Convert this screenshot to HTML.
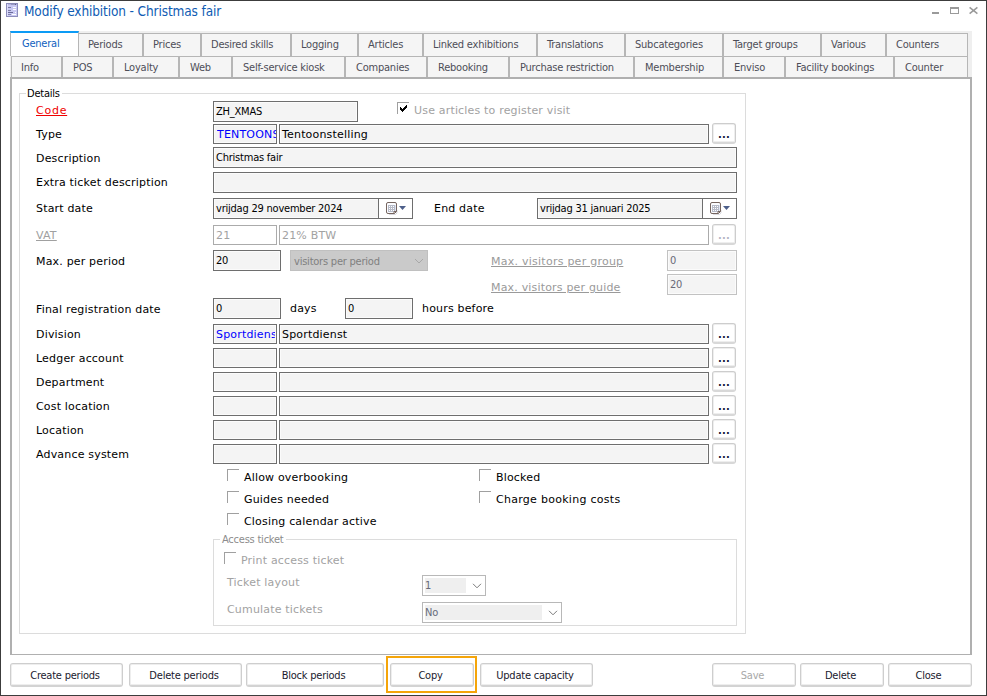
<!DOCTYPE html>
<html><head><meta charset="utf-8"><title>Modify exhibition - Christmas fair</title>
<style>
html,body{margin:0;padding:0;background:#fff;}
body{width:987px;height:696px;position:relative;overflow:hidden;font-family:"DejaVu Sans","Liberation Sans",sans-serif;font-size:11px;color:#000}
body>div,body>span,body>svg,.a{position:absolute}
.t{line-height:13px;height:13px;white-space:pre;font-size:11px}
.v{font-family:"DejaVu Sans","Liberation Sans",sans-serif;letter-spacing:0.18px}
.tt{font-family:"DejaVu Sans Condensed","Liberation Sans",sans-serif;letter-spacing:-0.22px}
.title{font-family:"DejaVu Sans Condensed","Liberation Sans",sans-serif;font-size:13.5px;letter-spacing:-0.12px;color:#0f5cb3;line-height:13px}
.tab{box-sizing:border-box;font-family:"DejaVu Sans Condensed","Liberation Sans",sans-serif;font-size:11px;letter-spacing:-0.22px;color:#4e4e58;text-align:left;padding-left:10px;background:#f5f5f5;border:1px solid #b6b6b6;border-bottom:0;white-space:nowrap}
.tab span{display:block;line-height:13px}
.tab.r1 span{margin-top:4px}
.tab.r2 span{margin-top:4px}
.tab.act{background:#fff;border-top:2px solid #0c9bf5;color:#0f5fc0;padding-left:11px}
.tab.r1{padding-left:9px}
.tab.act span{margin-top:4px}
.in{box-sizing:border-box;border:1px solid #6e6e6e;background:#f4f4f4;box-shadow:inset 0 0 0 1px #fbfbfb}
.cb{box-sizing:border-box;border-left:1px solid #a0a0a0;border-top:1px solid #a0a0a0;background:#fff}
.db{box-sizing:border-box;border:1px solid #cdcdcd;border-bottom:2px solid #d8d8d8;border-radius:3px;background:#fff;box-shadow:inset 0 0 0 1px #eeeeee}
.btn{box-sizing:border-box;border:1px solid #cecece;border-bottom:2px solid #d3d3d3;border-radius:3px;background:#fff;box-shadow:inset 0 0 0 1px #eeeeee;font-family:"DejaVu Sans Condensed","Liberation Sans",sans-serif;font-size:11px;letter-spacing:-0.22px;color:#1a1a2e;text-align:center;padding-right:3px;white-space:nowrap}
.btn span{display:block;line-height:13px;margin-top:5px}
.btn.dis{color:#a8a8a8}
</style></head>
<body>
<svg class="a" style="left:6px;top:3px" width="12" height="14" viewBox="0 0 12 14">
<rect x="0.5" y="0.5" width="11" height="13" fill="#c9c9f2" stroke="#8d8dbb"/>
<rect x="1" y="1" width="1" height="12" fill="#dcdcfa"/>
<rect x="2" y="1" width="9" height="1" fill="#b4b4de"/><rect x="5" y="1" width="4" height="1" fill="#9a9ac2"/><rect x="9" y="1" width="1" height="1" fill="#5f5f88"/>
<rect x="2" y="4" width="3" height="1" fill="#7c7ca4"/><rect x="7" y="4" width="3" height="1" fill="#fff"/>
<rect x="2" y="7" width="3" height="1" fill="#7c7ca4"/><rect x="7" y="6" width="3" height="1" fill="#fff"/>
<rect x="2" y="9" width="5" height="1" fill="#6a6a98"/><rect x="9" y="9" width="1" height="1" fill="#fff"/>
<rect x="2" y="11" width="3" height="1" fill="#8484ae"/><rect x="6" y="11" width="4" height="1" fill="#fff"/>
</svg>
<span class="t title" style="left:24px;top:5px;">Modify exhibition - Christmas fair</span>
<div style="left:932px;top:12px;width:7px;height:2px;background:#9a9a9a"></div>
<div style="left:950px;top:7px;width:9px;height:7px;box-sizing:border-box;border:1px solid #9a9a9a;border-top-width:2px"></div>
<svg class="a" style="left:968px;top:6px" width="11" height="9" viewBox="0 0 11 9"><path d="M1.6 1.3 L9.4 7.7 M9.4 1.3 L1.6 7.7" stroke="#9a9a9a" stroke-width="1.5" fill="none"/></svg>
<div style="left:10px;top:31px;width:962px;height:47px;background:#efefef"></div>
<div class="tab act" style="left:10px;top:31px;width:69px;height:25px"><span>General</span></div>
<div class="tab r1" style="left:79px;top:33px;width:64px;height:23px;border-left:0;"><span>Periods</span></div>
<div class="tab r1" style="left:143px;top:33px;width:58px;height:23px;"><span>Prices</span></div>
<div class="tab r1" style="left:201px;top:33px;width:90px;height:23px;"><span>Desired skills</span></div>
<div class="tab r1" style="left:291px;top:33px;width:67px;height:23px;"><span>Logging</span></div>
<div class="tab r1" style="left:358px;top:33px;width:65px;height:23px;"><span>Articles</span></div>
<div class="tab r1" style="left:423px;top:33px;width:114px;height:23px;"><span>Linked exhibitions</span></div>
<div class="tab r1" style="left:537px;top:33px;width:88px;height:23px;"><span>Translations</span></div>
<div class="tab r1" style="left:625px;top:33px;width:98px;height:23px;"><span>Subcategories</span></div>
<div class="tab r1" style="left:723px;top:33px;width:98px;height:23px;"><span>Target groups</span></div>
<div class="tab r1" style="left:821px;top:33px;width:65px;height:23px;"><span>Various</span></div>
<div class="tab r1" style="left:886px;top:33px;width:82px;height:23px;"><span>Counters</span></div>
<div class="tab r2" style="left:11px;top:56px;width:51px;height:21px;padding-left:9px;"><span>Info</span></div>
<div class="tab r2" style="left:62px;top:56px;width:51px;height:21px;"><span>POS</span></div>
<div class="tab r2" style="left:113px;top:56px;width:66px;height:21px;"><span>Loyalty</span></div>
<div class="tab r2" style="left:179px;top:56px;width:53px;height:21px;"><span>Web</span></div>
<div class="tab r2" style="left:232px;top:56px;width:113px;height:21px;"><span>Self-service kiosk</span></div>
<div class="tab r2" style="left:345px;top:56px;width:82px;height:21px;"><span>Companies</span></div>
<div class="tab r2" style="left:427px;top:56px;width:82px;height:21px;"><span>Rebooking</span></div>
<div class="tab r2" style="left:509px;top:56px;width:125px;height:21px;"><span>Purchase restriction</span></div>
<div class="tab r2" style="left:634px;top:56px;width:89px;height:21px;"><span>Membership</span></div>
<div class="tab r2" style="left:723px;top:56px;width:62px;height:21px;"><span>Enviso</span></div>
<div class="tab r2" style="left:785px;top:56px;width:109px;height:21px;"><span>Facility bookings</span></div>
<div class="tab r2" style="left:894px;top:56px;width:74px;height:21px;"><span>Counter</span></div>
<div style="left:10px;top:77px;width:962px;height:578px;box-sizing:border-box;background:#fff;border:2px solid #b0b0b0;border-bottom-width:1px"></div>
<div style="left:19px;top:93px;width:727px;height:541px;box-sizing:border-box;border:1px solid #dcdcdc"></div>
<div style="left:26px;top:88px;width:36px;height:10px;background:#fff"></div>
<span class="t tt" style="left:27px;top:87px;">Details</span>
<span class="t v" style="left:36px;top:104px;color:#f00000;text-decoration:underline;letter-spacing:0.75px">Code</span>
<span class="t v" style="left:36px;top:128px;">Type</span>
<span class="t v" style="left:36px;top:152px;">Description</span>
<span class="t v" style="left:36px;top:176px;">Extra ticket description</span>
<span class="t v" style="left:36px;top:202px;">Start date</span>
<span class="t v" style="left:36px;top:229px;color:#a0a0a0;text-decoration:underline">VAT</span>
<span class="t v" style="left:36px;top:255px;">Max. per period</span>
<span class="t v" style="left:36px;top:303px;">Final registration date</span>
<span class="t v" style="left:36px;top:328px;">Division</span>
<span class="t v" style="left:36px;top:352px;">Ledger account</span>
<span class="t v" style="left:36px;top:376px;">Department</span>
<span class="t v" style="left:36px;top:400px;">Cost location</span>
<span class="t v" style="left:36px;top:424px;">Location</span>
<span class="t v" style="left:36px;top:448px;">Advance system</span>
<div class="in" style="left:213px;top:101px;width:145px;height:21px;"></div>
<span class="t tt" style="left:216px;top:105px;">ZH_XMAS</span>
<div class="cb" style="left:397px;top:102px;width:12px;height:12px;"></div>
<svg class="a" style="left:400px;top:105px" width="7" height="7" viewBox="0 0 7 7" shape-rendering="crispEdges"><path d="M0 2h1v3h-1zM1 3h1v3h-1zM2 4h1v3h-1zM3 3h1v3h-1zM4 2h1v3h-1zM5 1h1v3h-1zM6 0h1v3h-1z" fill="#000"/></svg>
<span class="t v" style="left:414px;top:104px;color:#a2a2a2">Use articles to register visit</span>
<div class="in" style="left:213px;top:124px;width:64px;height:20px;"></div>
<span class="t v" style="left:217px;top:128px;color:#0000ff;width:59px;overflow:hidden">TENTOONS</span>
<div class="in" style="left:279px;top:124px;width:430px;height:20px;"></div>
<span class="t v" style="left:282px;top:128px;">Tentoonstelling</span>
<div class="db" style="left:712px;top:123px;width:24px;height:21px;"></div>
<span class="t v" style="left:718px;top:128px;color:#15153a;letter-spacing:0.2px;font-weight:bold;font-size:10px">...</span>
<div class="in" style="left:213px;top:147px;width:524px;height:21px;"></div>
<span class="t tt" style="left:216px;top:151px;">Christmas fair</span>
<div class="in" style="left:213px;top:172px;width:524px;height:21px;"></div>
<div class="in" style="left:213px;top:198px;width:200px;height:21px;"></div>
<div style="left:378px;top:199px;width:34px;height:19px;background:#fff;border-left:1px solid #6e6e6e;box-sizing:border-box"></div>
<span class="t tt" style="left:216px;top:202px;">vrijdag 29 november 2024</span>
<svg class="a" style="left:386px;top:202px" width="13" height="14" viewBox="0 0 13 14">
<path d="M3 12.5h6.5l1.5-1.500V8" stroke="#d9d9de" stroke-width="1" fill="none"/>
<path d="M2 .5h7q1.5 0 1.5 1.5v7.5l-2 2H2Q.5 11.500 .5 10V2Q.5 .5 2 .5z" fill="#fbfcff" stroke="#75655f"/>
<rect x="2" y="3" width="7" height="7" fill="#b7bbc8"/>
<rect x="9" y="3" width="1" height="6" fill="#dfe6f6"/>
<path d="M3 4h1v1h-1zM5 4h1v1h-1zM7 4h1v1h-1zM3 6h1v1h-1zM5 6h1v1h-1zM7 6h1v1h-1zM3 8h1v1h-1zM5 8h1v1h-1zM7 8h1v1h-1z" fill="#fff"/>
<path d="M8 11.500V9.500h2.500" stroke="#75655f" stroke-width="1" fill="none"/>
</svg>
<svg class="a" style="left:399px;top:206px" width="7" height="4" viewBox="0 0 7 4"><path d="M0 0h7L3.5 4z" fill="#4d5f8a"/></svg>
<span class="t v" style="left:434px;top:202px;">End date</span>
<div class="in" style="left:537px;top:198px;width:200px;height:21px;"></div>
<div style="left:702px;top:199px;width:34px;height:19px;background:#fff;border-left:1px solid #6e6e6e;box-sizing:border-box"></div>
<span class="t tt" style="left:540px;top:202px;">vrijdag 31 januari 2025</span>
<svg class="a" style="left:710px;top:202px" width="13" height="14" viewBox="0 0 13 14">
<path d="M3 12.5h6.5l1.5-1.500V8" stroke="#d9d9de" stroke-width="1" fill="none"/>
<path d="M2 .5h7q1.5 0 1.5 1.5v7.5l-2 2H2Q.5 11.500 .5 10V2Q.5 .5 2 .5z" fill="#fbfcff" stroke="#75655f"/>
<rect x="2" y="3" width="7" height="7" fill="#b7bbc8"/>
<rect x="9" y="3" width="1" height="6" fill="#dfe6f6"/>
<path d="M3 4h1v1h-1zM5 4h1v1h-1zM7 4h1v1h-1zM3 6h1v1h-1zM5 6h1v1h-1zM7 6h1v1h-1zM3 8h1v1h-1zM5 8h1v1h-1zM7 8h1v1h-1z" fill="#fff"/>
<path d="M8 11.500V9.500h2.500" stroke="#75655f" stroke-width="1" fill="none"/>
</svg>
<svg class="a" style="left:723px;top:206px" width="7" height="4" viewBox="0 0 7 4"><path d="M0 0h7L3.5 4z" fill="#4d5f8a"/></svg>
<div class="in" style="left:213px;top:225px;width:64px;height:20px;border-color:#ababab;background:#fff;box-shadow:none"></div>
<span class="t v" style="left:216px;top:229px;color:#a2a2a2">21</span>
<div class="in" style="left:279px;top:225px;width:430px;height:20px;border-color:#ababab;background:#fff;box-shadow:none"></div>
<span class="t v" style="left:282px;top:229px;color:#a2a2a2">21% BTW</span>
<div class="db" style="left:712px;top:224px;width:24px;height:21px;"></div>
<span class="t v" style="left:718px;top:229px;color:#b4b4c4;letter-spacing:0.2px;font-weight:bold;font-size:10px">...</span>
<div class="in" style="left:213px;top:250px;width:68px;height:21px;"></div>
<span class="t tt" style="left:216px;top:254px;">20</span>
<div style="left:290px;top:250px;width:138px;height:21px;box-sizing:border-box;background:#cacaca;border:1px solid #c0c0c0"></div>
<span class="t tt" style="left:294px;top:255px;color:#808080">visitors per period</span>
<svg class="a" style="left:414px;top:258px" width="10" height="6" viewBox="0 0 10 6"><path d="M1 1 L5 5 L9 1" stroke="#a8a8a8" stroke-width="1" fill="none"/></svg>
<span class="t v" style="left:491px;top:255px;color:#9a9a9a;text-decoration:underline;letter-spacing:0.25px">Max. visitors per group</span>
<span class="t v" style="left:491px;top:281px;color:#9a9a9a;text-decoration:underline">Max. visitors per guide</span>
<div class="in" style="left:667px;top:250px;width:70px;height:21px;border-color:#c2c2c2"></div>
<span class="t tt" style="left:670px;top:254px;color:#6a6a78">0</span>
<div class="in" style="left:667px;top:274px;width:70px;height:21px;border-color:#c2c2c2"></div>
<span class="t tt" style="left:670px;top:278px;color:#6a6a78">20</span>
<div class="in" style="left:213px;top:298px;width:68px;height:21px;"></div>
<span class="t tt" style="left:216px;top:302px;">0</span>
<span class="t v" style="left:290px;top:302px;">days</span>
<div class="in" style="left:345px;top:298px;width:68px;height:21px;"></div>
<span class="t tt" style="left:348px;top:302px;">0</span>
<span class="t v" style="left:422px;top:302px;">hours before</span>
<div class="in" style="left:213px;top:324px;width:64px;height:20px;"></div>
<span class="t v" style="left:216px;top:328px;color:#0000ff;width:59px;overflow:hidden">Sportdiens</span>
<div class="in" style="left:279px;top:324px;width:430px;height:20px;"></div>
<span class="t v" style="left:282px;top:328px;">Sportdienst</span>
<div class="db" style="left:712px;top:323px;width:24px;height:21px;"></div>
<span class="t v" style="left:718px;top:328px;color:#15153a;letter-spacing:0.2px;font-weight:bold;font-size:10px">...</span>
<div class="in" style="left:213px;top:348px;width:64px;height:20px;"></div>
<div class="in" style="left:279px;top:348px;width:430px;height:20px;"></div>
<div class="db" style="left:712px;top:347px;width:24px;height:21px;"></div>
<span class="t v" style="left:718px;top:352px;color:#15153a;letter-spacing:0.2px;font-weight:bold;font-size:10px">...</span>
<div class="in" style="left:213px;top:372px;width:64px;height:20px;"></div>
<div class="in" style="left:279px;top:372px;width:430px;height:20px;"></div>
<div class="db" style="left:712px;top:371px;width:24px;height:21px;"></div>
<span class="t v" style="left:718px;top:376px;color:#15153a;letter-spacing:0.2px;font-weight:bold;font-size:10px">...</span>
<div class="in" style="left:213px;top:396px;width:64px;height:20px;"></div>
<div class="in" style="left:279px;top:396px;width:430px;height:20px;"></div>
<div class="db" style="left:712px;top:395px;width:24px;height:21px;"></div>
<span class="t v" style="left:718px;top:400px;color:#15153a;letter-spacing:0.2px;font-weight:bold;font-size:10px">...</span>
<div class="in" style="left:213px;top:420px;width:64px;height:20px;"></div>
<div class="in" style="left:279px;top:420px;width:430px;height:20px;"></div>
<div class="db" style="left:712px;top:419px;width:24px;height:21px;"></div>
<span class="t v" style="left:718px;top:424px;color:#15153a;letter-spacing:0.2px;font-weight:bold;font-size:10px">...</span>
<div class="in" style="left:213px;top:444px;width:64px;height:20px;"></div>
<div class="in" style="left:279px;top:444px;width:430px;height:20px;"></div>
<div class="db" style="left:712px;top:443px;width:24px;height:21px;"></div>
<span class="t v" style="left:718px;top:448px;color:#15153a;letter-spacing:0.2px;font-weight:bold;font-size:10px">...</span>
<div class="cb" style="left:227px;top:469px;width:12px;height:12px;"></div>
<span class="t v" style="left:244px;top:471px;">Allow overbooking</span>
<div class="cb" style="left:227px;top:491px;width:12px;height:12px;"></div>
<span class="t v" style="left:244px;top:493px;">Guides needed</span>
<div class="cb" style="left:227px;top:513px;width:12px;height:12px;"></div>
<span class="t v" style="left:244px;top:515px;">Closing calendar active</span>
<div class="cb" style="left:479px;top:469px;width:12px;height:12px;"></div>
<span class="t v" style="left:496px;top:471px;">Blocked</span>
<div class="cb" style="left:479px;top:491px;width:12px;height:12px;"></div>
<span class="t v" style="left:496px;top:493px;letter-spacing:0.28px">Charge booking costs</span>
<div style="left:213px;top:539px;width:524px;height:87px;box-sizing:border-box;border:1px solid #dcdcdc"></div>
<div style="left:220px;top:534px;width:66px;height:10px;background:#fff"></div>
<span class="t tt" style="left:222px;top:533px;color:#8c8c8c">Access ticket</span>
<div class="cb" style="left:224px;top:552px;width:12px;height:12px;"></div>
<span class="t v" style="left:241px;top:554px;color:#a2a2a2">Print access ticket</span>
<span class="t v" style="left:227px;top:576px;color:#a2a2a2">Ticket layout</span>
<span class="t v" style="left:227px;top:603px;color:#a2a2a2">Cumulate tickets</span>
<div style="left:422px;top:575px;width:64px;height:21px;box-sizing:border-box;background:#fff;border:1px solid #b8b8b8"></div>
<div style="left:425px;top:578px;width:41px;height:15px;background:#efefef"></div>
<span class="t tt" style="left:425px;top:579px;color:#666a7a">1</span>
<svg class="a" style="left:472px;top:583px" width="10" height="6" viewBox="0 0 10 6"><path d="M1 0.8 L5 4.8 L9 0.8" stroke="#7a7a7a" stroke-width="1" fill="none"/></svg>
<div style="left:422px;top:602px;width:140px;height:21px;box-sizing:border-box;background:#fff;border:1px solid #b8b8b8"></div>
<div style="left:425px;top:605px;width:117px;height:15px;background:#efefef"></div>
<span class="t tt" style="left:425px;top:606px;color:#666a7a">No</span>
<svg class="a" style="left:548px;top:610px" width="10" height="6" viewBox="0 0 10 6"><path d="M1 0.8 L5 4.8 L9 0.8" stroke="#7a7a7a" stroke-width="1" fill="none"/></svg>
<div style="left:386px;top:656px;width:91px;height:37px;box-sizing:border-box;border:2px solid #f5a50a"></div>
<div class="btn" style="left:10px;top:663px;width:113px;height:24px"><span>Create periods</span></div>
<div class="btn" style="left:129px;top:663px;width:113px;height:24px"><span>Delete periods</span></div>
<div class="btn" style="left:246px;top:663px;width:138px;height:24px"><span>Block periods</span></div>
<div class="btn" style="left:390px;top:663px;width:84px;height:24px"><span>Copy</span></div>
<div class="btn" style="left:480px;top:663px;width:113px;height:24px"><span>Update capacity</span></div>
<div class="btn dis" style="left:712px;top:663px;width:84px;height:24px"><span>Save</span></div>
<div class="btn" style="left:800px;top:663px;width:84px;height:24px"><span>Delete</span></div>
<div class="btn" style="left:888px;top:663px;width:84px;height:24px"><span>Close</span></div>
<div style="left:0px;top:0px;width:987px;height:696px;box-sizing:border-box;border:1px solid #3c3c3c"></div>
</body></html>
